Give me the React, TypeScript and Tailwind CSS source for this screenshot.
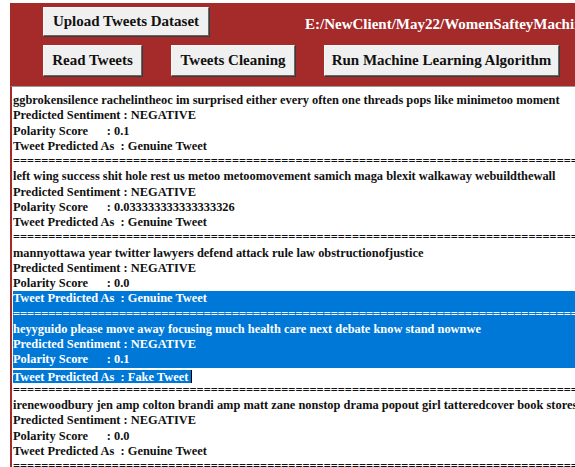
type Result = {
  tweet: string;
  score: string;
  label: string;
};

const results: Result[] = [
  {
    tweet:
      "ggbrokensilence rachelintheoc im surprised either every often one threads pops like minimetoo moment",
    score: "0.1",
    label: "Genuine Tweet",
  },
  {
    tweet:
      "left wing success shit hole rest us metoo metoomovement samich maga blexit walkaway webuildthewall",
    score: "0.033333333333333326",
    label: "Genuine Tweet",
  },
  {
    tweet: "mannyottawa year twitter lawyers defend attack rule law obstructionofjustice",
    score: "0.0",
    label: "Genuine Tweet",
  },
  {
    tweet:
      "heyyguido please move away focusing much health care next debate know stand nownwe",
    score: "0.1",
    label: "Fake Tweet",
  },
  {
    tweet:
      "irenewoodbury jen amp colton brandi amp matt zane nonstop drama popout girl tatteredcover book stores",
    score: "0.0",
    label: "Genuine Tweet",
  },
];

type Sel = "none" | "line" | "text";

type Line = { text: string; sel: Sel };

const divider = "=".repeat(140);

// selection runs from block 3's prediction row to the end of block 4's prediction text
function buildLines(): Line[] {
  const lines: Line[] = [];
  results.forEach((r, i) => {
    const inSel = i === 3;
    lines.push({ text: r.tweet, sel: inSel ? "line" : "none" });
    lines.push({ text: "Predicted Sentiment : NEGATIVE", sel: inSel ? "line" : "none" });
    lines.push({ text: "Polarity Score      : " + r.score, sel: inSel ? "line" : "none" });
    lines.push({
      text: "Tweet Predicted As  : " + r.label,
      sel: i === 2 ? "line" : i === 3 ? "text" : "none",
    });
    lines.push({ text: divider, sel: i === 2 ? "line" : "none" });
  });
  return lines;
}

function Button({ label, width }: { label: string; width: string }) {
  return (
    <div
      className={`${width} flex h-full shrink-0 items-center justify-center whitespace-nowrap border border-t-[#f8f8f8] border-l-[#f8f8f8] border-r-[#6a6a6a] border-b-[#6a6a6a] bg-[#f0f0f0] text-[15px] font-bold text-[#111] shadow-[1px_1px_0_#3a3a3a]`}
    >
      {label}
    </div>
  );
}

export default function App() {
  const lines = buildLines();
  return (
    <div
      className="h-[467px] w-[575px] overflow-hidden bg-white"
      style={{ fontFamily: '"Liberation Serif", "Times New Roman", serif' }}
    >
      <div className="ml-[10px] mt-[3px] flex h-[83px] flex-col overflow-hidden bg-[#a52a2a] pl-[33px] pt-[4px]">
        <div className="flex h-[29px] items-start">
          <Button label="Upload Tweets Dataset" width="w-[166px]" />
          <div className="ml-[96px] mt-[6px] shrink-0 whitespace-nowrap text-[15px] font-bold text-white">
            E:/NewClient/May22/WomenSafteyMachineLearning/Dataset/tweets.csv loaded
          </div>
        </div>
        <div className="mt-[9px] flex h-[31px] gap-[29px]">
          <Button label="Read Tweets" width="w-[99px]" />
          <Button label="Tweets Cleaning" width="w-[124px]" />
          <Button label="Run Machine Learning Algorithm" width="w-[235px]" />
        </div>
      </div>

      <div className="ml-[10px] h-[381px] border-l-2 border-t border-l-[#a52a2a] border-t-[#9a9a9a] bg-white pl-px pt-[6px]">
        {lines.map((l, i) => (
          <div
            key={i}
            className={`h-[15.25px] overflow-hidden whitespace-pre text-[12.4px] font-bold leading-[15.25px] ${
              l.sel === "line" ? "bg-[#0078d7] text-white" : "text-[#111]"
            }`}
          >
            {l.sel === "text" ? (
              <span className="bg-[#0078d7] pr-[3px] text-white">{l.text}</span>
            ) : (
              l.text
            )}
            {l.sel === "text" ? (
              <span className="inline-block h-[13px] w-px translate-y-[2px] bg-black align-baseline" />
            ) : null}
          </div>
        ))}
      </div>
    </div>
  );
}
